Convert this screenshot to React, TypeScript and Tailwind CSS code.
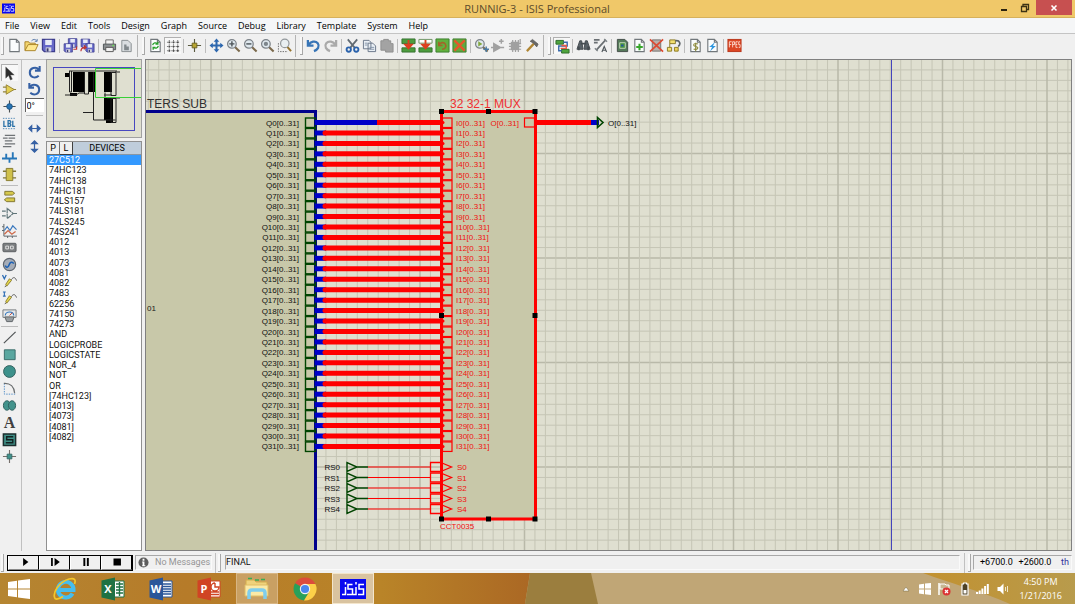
import React from "react";

type IconDef = { label: string; art: React.ReactNode; pressed?: boolean };

const Glyph = ({ children }: { children: React.ReactNode }) => (
  <svg viewBox="0 0 16 16" className="h-[15px] w-[15px] shrink-0" fill="none" aria-hidden="true">
    {children}
  </svg>
);

const page = (
  <path d="M3 1.500h7l3 3v10H3z M10 1.500v3h3" fill="#fafcfd" stroke="#71777b" strokeWidth="1.200" />
);
const floppy = (x: number, y: number, s: number) => (
  <g transform={`translate(${x} ${y}) scale(${s})`}>
    <path d="M1 1h13v13H3l-2-2z" fill="#6668c8" stroke="#3c3c8c" strokeWidth="1.200" />
    <path d="M4 1.500h7V7H4z" fill="#e8ecf6" />
    <path d="M4.500 9.500h6V14h-6z" fill="#d6d8de" />
    <path d="M5.500 10.500h2V14h-2z" fill="#3a3a70" />
  </g>
);
const lens = (
  <>
    <path d="M9.500 9.500l5 5" stroke="#7b6a4c" strokeWidth="2.200" />
    <circle cx="6.300" cy="6.300" r="4.600" fill="#dfe8ee" stroke="#7c8288" strokeWidth="1.300" />
  </>
);

const fileIcons: IconDef[][] = [
  [
    { label: "New design", art: page },
    {
      label: "Open design",
      art: (
        <>
          <path d="M1 13V4h4l1 1.500h6V8" fill="#f3d670" stroke="#a98228" />
          <path d="M1 13.500L4.500 7H15l-3 6.500z" fill="#ffe88e" stroke="#a98228" />
          <path d="M8 3c2-2 4-2 5.500 0M14 1v2.500h-2.500" stroke="#5676a8" />
        </>
      ),
    },
    { label: "Save design", art: floppy(0.5, 0.5, 1) },
  ],
  [
    {
      label: "Import section",
      art: (
        <>
          {floppy(5, 0, 0.7)}
          {floppy(0.5, 5.5, 0.68)}
          <path d="M11 12h3.500V9" stroke="#c03434" strokeWidth="1.300" />
        </>
      ),
    },
    {
      label: "Export section",
      art: (
        <>
          {floppy(0.5, 0.5, 0.7)}
          {floppy(5.5, 5.5, 0.68)}
          <path d="M1 14c0-3 2-4 5-4M4 8l2.500 2L4 12" stroke="#c03434" strokeWidth="1.300" />
        </>
      ),
    },
  ],
  [
    {
      label: "Print",
      art: (
        <>
          <path d="M4 7V2h8v5" fill="#f4f4f4" stroke="#666" />
          <path d="M1.500 6.500h13v6h-13z" fill="#8b9092" stroke="#4f5456" />
          <path d="M4 10h8v4.500H4z" fill="#f2f2f2" stroke="#555" />
          <path d="M11 8h2" stroke="#6ede58" strokeWidth="1.500" />
        </>
      ),
    },
    {
      label: "Set print area",
      art: (
        <>
          <path d="M3 2.500h6.500L13 6v8.500H3z" fill="#d9dde0" stroke="#858b8e" />
          <path d="M5.500 7v6h5V9H8V7z" fill="#80878b" />
        </>
      ),
    },
  ],
];

const viewIcons: IconDef[][] = [
  [
    {
      label: "Redraw",
      art: (
        <>
          {page}
          <path d="M5 7.500c.5-2.500 3.500-3 5-1.500M10.500 4v2.500H8M11 8.500c-.5 2.500-3.500 3-5 1.500M5.500 12.500V10H8" stroke="#28a02c" strokeWidth="1.400" />
        </>
      ),
    },
    {
      label: "Toggle grid",
      pressed: true,
      art: (
        <>
          <path d="M3.500 1v14M8 1v14M12.500 1v14M1 3.500h14M1 8h14M1 12.500h14" stroke="#808080" strokeWidth="1.100" strokeDasharray="1.400 .9" />
          <path d="M2.700 2.700h1.600v1.600H2.700zM7.200 2.700h1.600v1.600H7.200zM11.700 2.700h1.600v1.600h-1.600zM2.700 7.200h1.600v1.600H2.700zM7.200 7.200h1.600v1.600H7.200zM11.700 7.200h1.600v1.600h-1.600zM2.700 11.700h1.600v1.600H2.700zM7.200 11.700h1.600v1.600H7.200zM11.700 11.700h1.600v1.600h-1.600z" fill="#4c4c4c" />
        </>
      ),
    },
  ],
  [
    {
      label: "Origin",
      art: (
        <>
          <path d="M8 1v14M1 8h14" stroke="#5a5a40" strokeWidth="1.200" />
          <path d="M5.500 5.500h5v5h-5z" fill="#b7a531" stroke="#6c6222" />
        </>
      ),
    },
  ],
  [
    {
      label: "Pan",
      art: (
        <>
          <path d="M8 2.500v11M2.500 8h11" stroke="#2d67ae" strokeWidth="2.200" />
          <path d="M8 .5L11 4H5zM8 15.500L5 12h6zM.5 8L4 5v6zM15.500 8L12 11V5z" fill="#2d67ae" />
        </>
      ),
    },
    { label: "Zoom in", art: <>{lens}<path d="M6.300 3.500v5.500M3.500 6.300H9" stroke="#4c5358" strokeWidth="1.500" /></> },
    { label: "Zoom out", art: <>{lens}<path d="M3.500 6.300H9" stroke="#4c5358" strokeWidth="1.500" /></> },
    { label: "Zoom all", art: <>{lens}<circle cx="6.300" cy="6.300" r="2.300" fill="#7d858b" /></> },
    {
      label: "Zoom area",
      art: (
        <>
          <path d="M1.500 5.500v9h10" stroke="#666" strokeDasharray="1.500 1.200" />
          <path d="M11 9.500l4 4.500" stroke="#94732e" strokeWidth="2.200" />
          <circle cx="8.300" cy="5.800" r="4.500" fill="#e9eff2" stroke="#92989c" strokeWidth="1.300" />
        </>
      ),
    },
  ],
];

const undoPath = "M2 2v6h6M2.500 7.500C5 3.500 10 2.500 12.500 5.500c2.500 3.500 0 7-4 8.500";
const editIcons: IconDef[][] = [
  [
    { label: "Undo", art: <path d={undoPath} stroke="#3774b6" strokeWidth="2.400" /> },
    { label: "Redo", art: <g transform="translate(16 0) scale(-1 1)"><path d={undoPath} stroke="#aaaaaa" strokeWidth="2.400" /></g> },
  ],
  [
    {
      label: "Cut",
      art: (
        <>
          <path d="M3 1.500l7.500 9M13 1.500l-7.500 9" stroke="#626b73" strokeWidth="1.900" />
          <circle cx="4" cy="12.300" r="2.300" stroke="#2a62ac" strokeWidth="2" />
          <circle cx="12" cy="12.300" r="2.300" stroke="#2a62ac" strokeWidth="2" />
        </>
      ),
    },
    {
      label: "Copy",
      art: (
        <>
          <path d="M1.500 2.500h6l2 2v7h-8zM6.500 5.500h5l3 3v6h-8z" fill="#e9eff5" stroke="#687488" />
          <path d="M3 5.500h3M3 7.500h3M8 10h5M8 12h5" stroke="#8494aa" />
        </>
      ),
    },
    { label: "Paste", art: <path d="M2 3h3V1.500h5V3h2.500v3H15v9H7v-2H2z" fill="#a3a3a3" stroke="#8e8e8e" /> },
  ],
  [
    {
      label: "Block copy",
      art: (
        <>
          <path d="M1 1h14v5H1zM1 10.500h14V15H1z" fill="#4c9c3e" stroke="#347030" />
          <path d="M8 2v8M4.500 7L8 11l3.500-4z" fill="#e24b2a" stroke="#dc4020" strokeWidth="2" />
        </>
      ),
    },
    {
      label: "Block move",
      art: (
        <>
          <path d="M1 1.500h14v4H1z" fill="#fff" stroke="#6a9160" />
          <path d="M1 10.500h14V15H1z" fill="#4c9c3e" stroke="#347030" />
          <path d="M8 2v8M4.500 7L8 11l3.500-4z" fill="#e24b2a" stroke="#dc4020" strokeWidth="2" />
        </>
      ),
    },
    {
      label: "Block rotate",
      art: (
        <>
          <path d="M1 1h14v14H1z" fill="#61b03e" stroke="#3a7e30" />
          <path d="M4 4v4h4M4.500 7.500c1-3 5-3.500 6.500-1s0 5.500-3.500 5.500" stroke="#a3642a" strokeWidth="1.700" />
        </>
      ),
    },
    {
      label: "Block delete",
      art: (
        <>
          <path d="M1 1h14v14H1z" fill="#61a83e" stroke="#3a7e30" />
          <path d="M2.500 2.500l11 11M13.500 2.500l-11 11" stroke="#e4572c" strokeWidth="2.500" />
        </>
      ),
    },
  ],
  [
    {
      label: "Pick parts",
      art: (
        <>
          {lens}
          <path d="M4.500 3.500v5.600l4.500-2.800z" fill="#83a83c" />
          <path d="M13 9v6M10 12h6" stroke="#497aa4" strokeWidth="1.500" />
        </>
      ),
    },
    { label: "Make device", art: <path d="M3 6l7 4-7 4zM0 10h3M10 10h4M11 1v5M8.500 3.500h5" fill="#a1a1a1" stroke="#a1a1a1" strokeWidth="1.600" /> },
    {
      label: "Packaging tool",
      art: (
        <>
          <path d="M3 4h9v9H3z" fill="#a0a0a0" />
          <path d="M5 2v13M8 2v13M11 2v13M1 6h13M1 9h13M1 12h13M13 1v5" stroke="#a0a0a0" strokeWidth="1.300" />
        </>
      ),
    },
    {
      label: "Decompose",
      art: (
        <>
          <path d="M9.500 6L2 14" stroke="#b08634" strokeWidth="2.400" />
          <path d="M5.500 3.500L8 1.500l6 5-1.500 3L9 5.500z" fill="#696969" stroke="#555" strokeWidth=".7" />
        </>
      ),
    },
  ],
];

const toolIcons: IconDef[][] = [
  [
    {
      label: "Wire autorouter",
      pressed: true,
      art: (
        <>
          <path d="M1 1.500h8v4H1zM7 11h8v4H7z" fill="#4fa43e" stroke="#2d6a2a" />
          <path d="M9 3.500h4v4H4v5h3" stroke="#3769ac" strokeWidth="1.500" />
          <path d="M7 7h5v3H6" stroke="#e85a42" strokeWidth="1.500" />
        </>
      ),
    },
  ],
  [
    {
      label: "Search and tag",
      art: (
        <>
          <path d="M4 3h2l1.500 9H1zM10 3h2l3 9H8.500z" fill="#5a6268" stroke="#444b50" />
          <path d="M5 6h6M3 9v4M13 9v4" stroke="#444b50" strokeWidth="2" />
        </>
      ),
    },
    {
      label: "Property assignment",
      art: (
        <>
          <path d="M1 2h6M1 5h4M13.500 2l-10 11" stroke="#6a6f73" strokeWidth="1.800" />
          <path d="M12 1l3 3M2 11l3 3" stroke="#7e8488" strokeWidth="1.500" />
          <path d="M9.500 15l2.500-6 2.500 6M10.500 13h3" stroke="#4f565b" strokeWidth="1.200" />
        </>
      ),
    },
  ],
  [
    {
      label: "Design explorer",
      art: (
        <>
          <path d="M2.500 1.500h8l3 3v10h-11z" fill="#557a5a" stroke="#404a44" />
          <path d="M5 5h6v6H5z" fill="#4b9440" stroke="#c5dabb" />
          <path d="M6.500 8h2.500" stroke="#2455a4" strokeWidth="2" />
        </>
      ),
    },
    { label: "New sheet", art: <>{page}<path d="M8 6v7M4.500 9.500h7" stroke="#36a62a" strokeWidth="2.200" /></> },
    {
      label: "Remove sheet",
      art: (
        <>
          <path d="M3.500 2h9v12h-9z" fill="#b9b0aa" stroke="#73706d" />
          <path d="M1 1.500l14 13M15 1.500l-14 13" stroke="#dc4a32" strokeWidth="1.800" />
        </>
      ),
    },
    {
      label: "Exit to parent",
      art: (
        <>
          <path d="M4 2h6v4H4zM1.500 10H6v4H1.500z" fill="#f2df70" stroke="#8b7a24" />
          <path d="M4 10V6M9 10h4v4H9z" fill="#ecd258" stroke="#8b7a24" />
          <path d="M10 3c5-1 6 4 3 6" stroke="#5d6367" strokeWidth="1.800" />
        </>
      ),
    },
  ],
  [
    {
      label: "Bill of materials",
      art: (
        <>
          {page}
          <path d="M10.500 6.500c-1-1-4.500-1-4.500 1s4.500 1 4.500 3-3.500 2-4.500 1M8.200 5v9" stroke="#8c8a3c" strokeWidth="1.200" />
        </>
      ),
    },
    { label: "Electrical rules check", art: <>{page}<path d="M10.500 4.500L4.500 9.500h3l-2 4.500 6-5.500H8.500z" fill="#2f97e0" /></> },
  ],
  [
    {
      label: "Netlist to ARES",
      art: (
        <>
          <rect x="1" y="1.500" width="14" height="13" fill="#dc4624" stroke="#b83418" />
          <path d="M2.500 10V4h2.500M2.500 7h2M6 10V4h2v3H6M9.500 4v6h1.800M9.500 4h2M9.500 7h1.500M14 4h-1.500v3H14v3h-1.500" stroke="#ffe4dc" strokeWidth=".9" />
        </>
      ),
    },
  ],
];

const modeIcons: IconDef[][] = [
  [
    { label: "Selection mode", pressed: true, art: <path d="M4 1v12l3-3 2 5 2-1-2-4.500h4z" fill="#2e2e2e" stroke="#555" strokeWidth=".5" /> },
    {
      label: "Component mode",
      art: (
        <>
          <path d="M1 5.500h4M1 10.500h4M12 8h3" stroke="#928238" strokeWidth="1.300" />
          <path d="M4.500 3v10L13 8z" fill="#e3cf52" stroke="#948234" />
        </>
      ),
    },
    {
      label: "Junction dot mode",
      art: (
        <>
          <path d="M8 1.500v13M1.500 8h13" stroke="#4d5254" strokeWidth="1.200" />
          <circle cx="8" cy="8" r="3" fill="#2674b4" stroke="#1d5282" />
        </>
      ),
    },
    {
      label: "Wire label mode",
      art: (
        <>
          <path d="M1 2.500h14M1 13.500h14" stroke="#4f86b4" strokeDasharray="1.500 1.300" />
          <path d="M2 5v6h2.500M6.500 5v6h2l1-1.500L8.500 8 9.500 6.500 8.500 5zM6.500 8h2M11.500 5v6H14" stroke="#2c72a8" strokeWidth="1.400" />
        </>
      ),
    },
    { label: "Text script mode", art: <path d="M3 2.500h11M1 5.500h5M7 5.500h7M3 8.500h8M3 11.500h11M1 14.500h9" stroke="#6f7376" strokeWidth="1.300" /> },
    { label: "Buses mode", art: <path d="M0 9h16M4.500 4v5M11.500 2.500v6.500M8 9v4.500" stroke="#2676b8" strokeWidth="2" /> },
    {
      label: "Subcircuit mode",
      art: (
        <>
          <path d="M1 4.500h4M1 11.500h4M11 4.500h4M11 11.500h4" stroke="#7f7634" strokeWidth="1.400" />
          <path d="M4.500 1.500h7v13h-7z" fill="#cfc04a" stroke="#857a30" />
        </>
      ),
    },
  ],
  [
    { label: "Terminals mode", art: <path d="M3 2.500h8l2.500 2-2.500 2H3zM5 9.500h8.500v4H5l-2.500-2z" fill="#d6c84c" stroke="#7f7430" /> },
    { label: "Device pins mode", art: <path d="M5.500 2.500v11L12 8zM0 5.500h4M0 10.500h4M12 8h4" stroke="#5f7478" strokeWidth="1.200" strokeDasharray="5 .6" /> },
    {
      label: "Graph mode",
      art: (
        <>
          <path d="M2 1v13h14M0 4h2M0 8h2M6 14v2M11 14v2" stroke="#596064" />
          <path d="M2.500 8l3-4 3 4 3-5 4 4" stroke="#3a78be" strokeWidth="1.300" />
          <path d="M2.500 12l4-4 4 4 4-3" stroke="#cc6646" strokeWidth="1.300" />
        </>
      ),
    },
    {
      label: "Tape recorder mode",
      art: (
        <>
          <rect x="1" y="3.500" width="14" height="9" rx="1" fill="#7b7e80" stroke="#5a5d60" />
          <path d="M4 6.500h3v3H4zM9 6.500h3v3H9z" stroke="#e4e4e4" />
        </>
      ),
    },
    {
      label: "Generator mode",
      art: (
        <>
          <circle cx="8" cy="8" r="6.500" fill="#a6adb8" stroke="#5e656e" strokeWidth="1.300" />
          <path d="M3.500 9c1 3 3 2.500 4-.5s3.500-4 5-1.500" stroke="#1f62b4" strokeWidth="1.700" />
        </>
      ),
    },
    {
      label: "Voltage probe mode",
      art: (
        <>
          <path d="M0.500 1l2 4 2-4" stroke="#2d6cb4" strokeWidth="1.400" />
          <path d="M3 14l7-8c2-3 4-3 5.500 1" stroke="#555" />
          <path d="M5 13l5-6-2-2-4 6z" fill="#e8da4c" stroke="#8b7c2e" />
        </>
      ),
    },
    {
      label: "Current probe mode",
      art: (
        <>
          <path d="M1 1h3M2.500 1v4.500M1 5.500h3" stroke="#2d6cb4" strokeWidth="1.200" />
          <path d="M3 14l7-8c2-3 4-3 5.500 1" stroke="#555" />
          <path d="M5 13l5-6-2-2-4 6z" fill="#e8da4c" stroke="#8b7c2e" />
        </>
      ),
    },
    {
      label: "Virtual instruments mode",
      art: (
        <>
          <path d="M1 2h14v8H1z" fill="#e7e9ea" stroke="#757a7e" />
          <path d="M3.500 8c0-5 9-5 9 0" stroke="#3478be" strokeWidth="1.200" />
          <path d="M8 8l3-3" stroke="#c5473a" />
          <path d="M3 9.500h10l-2 5H5z" fill="#9a9fa2" stroke="#5c6164" />
        </>
      ),
    },
  ],
  [
    { label: "Line", art: <path d="M2 14L14.500 2" stroke="#505456" strokeWidth="1.300" /> },
    { label: "Box", art: <path d="M2.500 3h11.500v10.500H2.500z" fill="#5aa7a0" stroke="#376a68" /> },
    { label: "Circle", art: <circle cx="8" cy="8" r="6.300" fill="#3d918b" stroke="#33605e" /> },
    { label: "Arc", art: <><path d="M2.500 2.500V14H14" stroke="#4f8cc8" strokeDasharray="1.500 1.200" /><path d="M2 2.500c7-.5 11 4 11.500 10.500" stroke="#686c6e" strokeWidth="1.300" /></> },
    { label: "Path", art: <path d="M8 4.500C6 1.500 1.500 3 1.500 8S6 14.500 8 11.500c2 3 6.500 1.500 6.500-3.500S10 1.500 8 4.500zM8 4.500c-1.500 2-1.500 5 0 7" fill="#43938c" stroke="#2f5e5c" /> },
    {
      label: "Text",
      art: <text x="8" y="14" textAnchor="middle" className="fill-[#404040] font-['Liberation_Serif',serif] text-[17px] font-bold">A</text>,
    },
    {
      label: "Symbol",
      art: (
        <>
          <path d="M1.500 2h13v12.500h-13z" fill="#3f8f86" stroke="#1c2e2e" strokeWidth="1.600" />
          <path d="M12 5H5v3.200h6.500v3.300H4" stroke="#122020" strokeWidth="1.500" />
        </>
      ),
    },
    {
      label: "Marker",
      art: (
        <>
          <path d="M8 1v14M1 8h14" stroke="#77706c" strokeWidth="1.200" />
          <path d="M5.500 5.500h5v5h-5z" fill="#3f928b" stroke="#376a68" />
        </>
      ),
    },
  ],
];

const ToolButton = ({ icon }: { icon: IconDef }) => (
  <button
    aria-label={icon.label}
    className={`flex h-[17px] w-[17px] shrink-0 items-center justify-center ${icon.pressed ? "border-t border-l border-[#b0b0b0] bg-[#f8f8f8]" : ""}`}
  >
    <Glyph>{icon.art}</Glyph>
  </button>
);

const Grip = () => <span className="h-[18px] w-[3px] shrink-0 border-r border-b border-[#a8a8a8] bg-[#f8f8f8]" />;

const Toolbar = ({ groups, last }: { groups: IconDef[][]; last?: boolean }) => (
  <div className="flex items-center">
    {groups.map((group, i) => (
      <React.Fragment key={i}>
        {i > 0 && (
          <span className="flex w-[5px] justify-center">
            <span className="h-[14px] w-px bg-[#bcbcbc]" />
          </span>
        )}
        {group.map((icon) => (
          <ToolButton key={icon.label} icon={icon} />
        ))}
      </React.Fragment>
    ))}
    {!last && (
      <span className="flex w-3 items-center justify-center gap-1">
        <span className="h-[22px] w-px bg-[#b4b4b4]" />
        <Grip />
      </span>
    )}
  </div>
);

const menus = ["File", "View", "Edit", "Tools", "Design", "Graph", "Source", "Debug", "Library", "Template", "System", "Help"];

const devices = [
  "27C512", "74HC123", "74HC138", "74HC181", "74LS157", "74LS181", "74LS245", "74S241", "4012", "4013",
  "4073", "4081", "4082", "7483", "62256", "74150", "74273", "AND", "LOGICPROBE", "LOGICSTATE",
  "NOR_4", "NOT", "OR", "[74HC123]", "[4013]", "[4073]", "[4081]", "[4082]",
];

const IsisMark = ({ className }: { className: string }) => (
  <svg viewBox="0 0 26 20" className={className} fill="none" aria-hidden="true">
    <rect width="26" height="20" fill="#0808f0" />
    <path d="M2 15.500h3.500V8M5.500 3v2.500M12.500 5.500H8V10h4.500v5.500H7M12.500 15.500H16V8M16 3v2.500M24 5.500h-5V10h4.500v5.500h-5.500" stroke="#fff" strokeWidth="1.500" />
  </svg>
);

const TitleBar = () => (
  <header className="flex h-[18px] shrink-0 items-center border-b border-[#d6b15c] bg-[#f0c869] pl-[2px]">
    <IsisMark className="h-[11px] w-[13px]" />
    <h1 className="flex-1 pl-[65px] text-center text-[11px] leading-[16px] text-[#5c4c2c]">RUNNIG-3 - ISIS Professional</h1>
    <div className="flex h-full items-start">
      <button aria-label="Minimize" className="flex h-[15px] w-5 items-center justify-center">
        <svg viewBox="0 0 10 10" className="h-[10px] w-[10px]"><path d="M2 6h6v2H2z" fill="#2c2410" /></svg>
      </button>
      <button aria-label="Restore" className="flex h-[15px] w-[22px] items-center justify-center">
        <svg viewBox="0 0 10 10" className="h-[10px] w-[10px]" fill="none"><path d="M1.500 3.500h5v5h-5zM3 3V1.500h5.500v5H7" stroke="#3c3214" strokeWidth="1.300" /></svg>
      </button>
      <button aria-label="Close" className="mr-[3px] flex h-[15px] w-9 items-center justify-center bg-[#c75050]">
        <svg viewBox="0 0 10 10" className="h-[10px] w-[10px]"><path d="M2.500 2.500l5 5M7.500 2.500l-5 5" stroke="#fff" strokeWidth="1.600" /></svg>
      </button>
    </div>
  </header>
);

const Overview = () => (
  <div className="h-[79px] border border-[#a0a0a0] bg-[#dfdfd0]">
    <svg viewBox="0 0 94 77" className="h-full w-full" fill="none" role="img" aria-label="Design overview">
      <rect x="6.500" y="7.500" width="81" height="63" stroke="#4848c0" />
      <path d="M18 13h5v4h-5zM26 12h11v20H26zM41 12h7v20h-7zM57 12h8v20h-8zM57 38h9v22h-9zM59 60h7v3h-7zM23 33h7v3h-7z" fill="#000" />
      <path d="M22 11h48M22.500 11v21h2V11M37.500 12v22h4V12M18 35h11l3-2h6M46.500 12v48h22M64 12.500h5v23h-5zM64 38.500h5v24h-5zM36 52.500h11M58 32.500v5M57 35h8M60 38h13M68 12h5" stroke="#222" />
      <path d="M94 8.500H48.500v29H94" stroke="#38d038" />
    </svg>
  </div>
);

const PITCH = 10.45;
const rows = Array.from({ length: 32 }, (_, i) => ({ i, y: 122.5 + i * PITCH }));
const gridLines = Array.from({ length: 230 }, (_, i) => i - 9);

const Schematic = () => (
  <svg className="absolute inset-0 h-full w-full" fill="none" role="img" aria-label="Schematic sheet">
    <g transform="translate(-146 -60)" className="font-['Liberation_Sans',sans-serif] text-[8px]">
      {gridLines.map((n) => {
        const x = 211 + n * PITCH;
        const y = 153.5 + n * PITCH;
        const major = n % 10 === 0;
        return (
          <g key={n} stroke={major ? "#b9b9a9" : "#c5c5b5"} strokeWidth={major ? 1.5 : 1}>
            <path d={`M${x} 0V3000`} />
            <path d={`M0 ${y}H3000`} />
          </g>
        );
      })}
      <path d="M891.500 0V3000" stroke="#4444bc" strokeWidth="1" />

      <path d="M130 111.500H315.500V3000H130z" fill="#c8c8a9" stroke="#00008c" strokeWidth="3" />
      <text x="147" y="108" className="text-[12px]" fill="#303030">TERS SUB</text>
      <text x="147" y="311" fill="#202020">01</text>

      <rect x="441.500" y="111.500" width="94" height="407.500" fill="#c8c8a9" stroke="#ff0000" strokeWidth="3" />
      <text x="450" y="108" className="text-[12px]" fill="#f03030">32 32-1 MUX</text>
      <text x="440" y="529" fill="#f01010">CCT0035</text>

      {rows.map(({ i, y }) => (
        <g key={i}>
          <text x="299" y={y + 3} textAnchor="end" fill="#101010">{`Q${i}[0..31]`}</text>
          <rect x="305.500" y={y - 4.5} width="10" height="9.500" stroke="#004400" strokeWidth="1.400" />
          <path d={`M315 ${y}H${i === 0 ? 378 : 326}`} stroke="#0000c8" strokeWidth="5" />
          <path d={`M${i === 0 ? 377 : 325} ${y}H442`} stroke="#ff0000" strokeWidth="5" />
          {i > 0 && <circle cx="325" cy={y} r="2.500" fill="#ff0000" />}
          <circle cx="443" cy={y} r="1.500" fill="#ff0000" />
          <rect x="442.500" y={y - 4.5} width="9.500" height="9.500" stroke="#ff0000" strokeWidth="1.200" />
          <text x="456" y={y + 3} fill="#f01010">{`I${i}[0..31]`}</text>
        </g>
      ))}

      <text x="519" y="125.500" textAnchor="end" fill="#f01010">O[0..31]</text>
      <rect x="524.500" y="118" width="10" height="9" stroke="#ff0000" strokeWidth="1.200" />
      <path d="M535 122.500H592" stroke="#ff0000" strokeWidth="5" />
      <path d="M591 122.500H599" stroke="#0000c8" strokeWidth="5" />
      <path d="M597.500 117.500v10l5.500-5z" stroke="#004400" strokeWidth="1.600" />
      <text x="608" y="125.500" fill="#101010">O[0..31]</text>

      {[0, 1, 2, 3, 4].map((i) => {
        const y = 467 + i * 10.5;
        return (
          <g key={i}>
            <text x="324.500" y={y + 3} fill="#101010">{`RS${i}`}</text>
            <path d={`M347 ${y - 4.5}v9l10-4.500zM357 ${y}h11`} stroke="#004400" strokeWidth="1.400" />
            <path d={`M368 ${y}h62`} stroke="#ff0000" strokeWidth="1.200" />
            <path d={`M441 ${y - 4.5}H430.500v9H441M442 ${y - 4}l9.500 4-9.500 4`} stroke="#ff0000" strokeWidth="1.300" />
            <text x="457" y={y + 3} fill="#f01010">{`S${i}`}</text>
          </g>
        );
      })}

      {[[441.5, 111.5], [488.5, 111.5], [535, 111.5], [441.5, 315.5], [535, 315.5], [441.5, 519], [488.5, 519], [535, 519]].map(([x, y]) => (
        <rect key={`${x}-${y}`} x={x - 2.5} y={y - 2.5} width="5" height="5" fill="#000" />
      ))}
    </g>
  </svg>
);

const SidePanel = () => (
  <aside className="mr-[3px] flex w-[96px] shrink-0 flex-col">
    <Overview />
    <div className="mt-[3px] flex min-h-0 flex-1 flex-col border border-[#909090] bg-white font-['Roboto',sans-serif] text-[9px]">
      <div className="flex h-[13px] shrink-0 bg-[#f0f0f0] leading-[12px]">
        <button className="w-[13px] border-r border-b border-[#707070]">P</button>
        <button className="w-[13px] border-r border-b border-[#404040]">L</button>
        <h2 className="flex-1 border-b border-[#8896a4] bg-[#bfcddb] text-center">DEVICES</h2>
      </div>
      <ul className="grid h-[287px] shrink-0 auto-rows-fr leading-[10px] text-[#101010]">
        {devices.map((d, i) => (
          <li key={d} className={`flex items-center pl-[2px] ${i === 0 ? "bg-[#3399ff] text-white" : ""}`}>{d}</li>
        ))}
      </ul>
    </div>
  </aside>
);

const rotate = "M12.500 4.500C9.500 1.500 3 3 3 8s5.500 7 9.500 3.500M13.500 1v5h-5";

const ModeRail = () => (
  <div className="flex shrink-0">
    <nav aria-label="Modes" className="flex w-[22px] flex-col border-t border-r border-[#c0c0c0] pt-1 pr-[3px]">
      {modeIcons.map((group, i) => (
        <div key={i} className="flex flex-col items-center">
          {i > 0 && <span className="my-[2px] h-px w-[17px] bg-[#bcbcbc]" />}
          {group.map((icon) => (
            <ToolButton key={icon.label} icon={icon} />
          ))}
        </div>
      ))}
    </nav>
    <div className="flex w-6 flex-col items-center border-t border-[#c0c0c0] pt-1">
      <button aria-label="Rotate clockwise" className="flex h-[17px] items-center"><Glyph><path d={rotate} stroke="#3560a4" strokeWidth="2.200" /></Glyph></button>
      <button aria-label="Rotate anti-clockwise" className="flex h-[17px] items-center"><Glyph><g transform="translate(16 0) scale(-1 1)"><path d={rotate} stroke="#3560a4" strokeWidth="2.200" /></g></Glyph></button>
      <input aria-label="Angle" defaultValue="0°" className="h-[14px] w-[19px] border-t border-l border-[#606060] bg-white pl-px font-['Roboto',sans-serif] text-[9px]" />
      <span className="my-[3px] h-px w-[17px] bg-[#bcbcbc]" />
      <button aria-label="Mirror horizontally" className="flex h-[18px] items-center"><Glyph><path d="M4 8h8M5 5L2 8l3 3zM11 5l3 3-3 3z" fill="#3560a4" stroke="#3560a4" strokeWidth="1.300" /></Glyph></button>
      <button aria-label="Mirror vertically" className="flex h-[18px] items-center"><Glyph><path d="M8 4v8M5 5l3-3 3 3zM5 11l3 3 3-3z" fill="#3560a4" stroke="#3560a4" strokeWidth="1.300" /></Glyph></button>
    </div>
  </div>
);

const transport = [
  { label: "Play", d: "M7 3.500v9l6-4.500z" },
  { label: "Step", d: "M3.500 3.500h2v9h-2zM7.500 3.500v9l6-4.500z" },
  { label: "Pause", d: "M5 3.500h2.200v9H5zM9 3.500h2.200v9H9z" },
  { label: "Stop", d: "M4 4h8.500v8H4z" },
];

const well = "flex h-[15px] items-center border border-t-[#a8a8a8] border-l-[#a8a8a8] border-r-[#fafafa] border-b-[#fafafa]";

const StatusBar = () => (
  <footer className="flex h-[21px] shrink-0 items-center bg-[#f0f0f0] pl-px font-['Roboto',sans-serif] text-[9px]">
    <Grip />
    <div className="ml-[3px] flex border border-black">
      {transport.map((t) => (
        <button key={t.label} aria-label={t.label} className="flex h-[14px] w-[31px] items-center justify-center border-r border-b border-l border-r-black border-b-[#888] border-l-white">
          <svg viewBox="0 0 16 16" className="h-[14px] w-[14px]"><path d={t.d} fill="#000" /></svg>
        </button>
      ))}
    </div>
    <div className={`${well} ml-[2px] w-[77px] gap-[6px] pl-[2px] text-[#959595]`}>
      <svg viewBox="0 0 12 12" className="h-[11px] w-[11px]">
        <circle cx="6" cy="6" r="5.500" fill="#5d5d5d" />
        <path d="M5 2h2v2H5zM4.500 5H7v4h1v1H4.500V9H5V6h-.5z" fill="#fff" />
      </svg>
      No Messages
    </div>
    <span className="ml-[3px] h-[20px] w-px bg-[#c0c0c0]" />
    <span className="ml-[2px] flex"><Grip /></span>
    <div className={`${well} ml-1 flex-1 text-[#101010]`}>FINAL</div>
    <span className="mr-[3px] ml-1 h-[20px] w-px bg-[#c0c0c0]" />
    <Grip />
    <div className={`${well} mr-[3px] ml-[2px] w-[99px] justify-between pr-[2px] pl-[6px]`}>
      <span>+6700.0</span>
      <span>+2600.0</span>
      <span className="pl-1 text-[#30309c]">th</span>
    </div>
  </footer>
);

const OfficeIcon = ({ color, letter, inner }: { color: string; letter: string; inner: string }) => (
  <svg viewBox="0 0 24 24" className="h-6 w-6" fill="none" aria-hidden="true">
    <path d="M11 4h12v16H11z" fill="#fff" stroke={color} />
    <path d={inner} stroke={color} strokeWidth="1.400" />
    <path d="M0.500 3.500L14 .5v23L.5 20.500z" fill={color} />
    <text x="7" y="16" textAnchor="middle" fill="#fff" className="font-['Open_Sans',sans-serif] text-[11px] font-bold">{letter}</text>
  </svg>
);

const TaskButton = ({ label, active, children }: { label: string; active?: string; children: React.ReactNode }) => (
  <button aria-label={label} className={`flex h-full w-[42px] items-center justify-center ${active ?? ""}`}>
    {children}
  </button>
);

const Taskbar = () => (
  <nav aria-label="Taskbar" className="relative flex h-[31px] shrink-0 items-center bg-[#c0a676] text-white">
    <svg viewBox="0 0 1075 31" preserveAspectRatio="none" className="absolute inset-0 h-full w-full" aria-hidden="true">
      <defs>
        <linearGradient id="dune" x1="0" x2="1" y1="0" y2="0">
          <stop offset="0" stopColor="#b58531" />
          <stop offset=".35" stopColor="#b67b29" />
          <stop offset=".72" stopColor="#b98428" />
          <stop offset="1" stopColor="#ab6824" />
        </linearGradient>
        <linearGradient id="sun" x1="0" x2="1" y1="0" y2="0">
          <stop offset="0" stopColor="#c29130" />
          <stop offset="1" stopColor="#b89b4c" />
        </linearGradient>
      </defs>
      <path d="M0 0H530L525 31H0z" fill="url(#dune)" />
      <path d="M530 0H591L598 31H525z" fill="#9b7e3e" />
      <path d="M923 0H1075V31H1010C980 18 950 10 923 0z" fill="url(#sun)" />
    </svg>
    <div className="relative flex h-full flex-1 items-center gap-[6px]">
      <button aria-label="Start" className="flex h-full w-[38px] items-center justify-center">
        <svg viewBox="0 0 22 20" className="h-5 w-[22px]"><path d="M0 3l9-1.300v7.800H0zM10 1.500L22 0v9.500H10zM0 10.500h9v7.800L0 17zM10 10.500h12V20l-12-1.500z" fill="#fff" /></svg>
      </button>
      <TaskButton label="Internet Explorer">
        <svg viewBox="0 0 24 24" className="h-6 w-6" fill="none">
          <path d="M19.500 16.500A7.800 7.800 0 1 1 20.500 13H6.500" stroke="#46bdee" strokeWidth="4" />
          <path d="M2 21.500C-1 16 6 5 16 2c6-1.500 7 1 5.500 5M2 21.500c2 1.500 5 0 8-2" stroke="#f4c629" strokeWidth="1.700" />
        </svg>
      </TaskButton>
      <TaskButton label="Excel"><OfficeIcon color="#1f7244" letter="X" inner="M15 7h7M15 10h7M15 13h7M15 16h7M18.500 5v14" /></TaskButton>
      <TaskButton label="Word"><OfficeIcon color="#2a5699" letter="W" inner="M14 7h8M14 9.500h8M14 12h8M14 14.500h8M14 17h8" /></TaskButton>
      <TaskButton label="PowerPoint"><OfficeIcon color="#d04424" letter="P" inner="M18 6v4h4a4 4 0 1 1-4-4M14 15h8M14 17.500h8" /></TaskButton>
      <TaskButton label="File Explorer" active="border border-[#d8b583] bg-[#c9a063]">
        <svg viewBox="0 0 26 24" className="h-6 w-[26px]" fill="none">
          <path d="M2 3h8l2 2h11v13H2z" fill="#efd27c" stroke="#d4ac4e" />
          <path d="M4 1.500h4M11 3h4M17 2.500h4" stroke="#38ac54" strokeWidth="1.500" />
          <path d="M1 8h23v11H1z" fill="#fbe9a6" stroke="#e0bd64" />
          <path d="M5 22v-6c0-3 2-3 3-3h10c2 0 3 1 3 3v6" stroke="#7fcdec" strokeWidth="3.500" />
        </svg>
      </TaskButton>
      <TaskButton label="Chrome">
        <svg viewBox="0 0 24 24" className="h-6 w-6">
          <path d="M12 12L2 6.300A11.500 11.500 0 0 1 22 6.300L22.500 7H12z" fill="#dd4c3c" />
          <path d="M12 12L2 6.300A11.500 11.500 0 0 0 11 23.400l5.500-9z" fill="#29a05a" />
          <path d="M12 7h10.400A11.500 11.500 0 0 1 11 23.400l5.500-9z" fill="#fcd048" />
          <circle cx="12" cy="12" r="5.200" fill="#f6f4ee" />
          <circle cx="12" cy="12" r="4.100" fill="#4a87ee" />
        </svg>
      </TaskButton>
      <TaskButton label="ISIS Professional" active="border border-[#f4e6cc] bg-[#d9c3a0]"><IsisMark className="h-5 w-[26px]" /></TaskButton>
    </div>
    <div className="relative flex h-full items-center gap-[6px] pr-[13px]">
      <button aria-label="Show hidden icons"><svg viewBox="0 0 8 8" className="mr-[3px] h-2 w-2"><path d="M1 6l3-4 3 4z" fill="#fff" stroke="#776840" strokeWidth=".5" /></svg></button>
      <svg viewBox="0 0 12 12" className="h-3 w-3"><path d="M0 1.500l5-.7v4.700H0zM6 .6L12 0v5.500H6zM0 6.500h5v4.700l-5-.7zM6 6.500h6V12l-6-.7z" fill="#fff" /></svg>
      <svg viewBox="0 0 14 14" className="h-[14px] w-[14px]" fill="none">
        <path d="M2 1v12" stroke="#fff" strokeWidth="1.500" />
        <path d="M3 2h5l1 1h3v5H7L6 7H3z" fill="#c6b793" stroke="#fff" />
        <circle cx="9.500" cy="9.500" r="4" fill="#db3434" />
        <path d="M8 8l3 3M11 8l-3 3" stroke="#fff" strokeWidth="1.300" />
      </svg>
      <svg viewBox="0 0 10 14" className="ml-[3px] h-[14px] w-[10px]" fill="none">
        <path d="M3.500 2V1h3v1H8v11H2V2z" fill="#4d4123" stroke="#fff" strokeWidth="1.200" />
        <path d="M3.500 8h3v3.500h-3z" fill="#fff" />
      </svg>
      <svg viewBox="0 0 13 12" className="h-3 w-[13px]"><path d="M0 9h2v2H0zM2.700 7.500h2V11h-2zM5.400 5.500h2V11h-2zM8.100 3h2v8h-2zM10.800 1h2v10h-2z" fill="#fff" /></svg>
      <svg viewBox="0 0 12 12" className="ml-[2px] h-3 w-3" fill="none">
        <path d="M0.500 4h2.500L6.500.5v11L3 8H.5z" fill="#fff" />
        <path d="M8.500 4v4M10.500 3v6" stroke="#f0e6cc" />
      </svg>
      <time className="ml-1 text-center text-[9px] leading-[14px]">4:50 PM<br />1/21/2016</time>
    </div>
  </nav>
);

export default function App() {
  return (
    <div className="flex h-screen flex-col overflow-hidden bg-[#f0f0f0] font-['Open_Sans',sans-serif] text-black">
      <TitleBar />
      <nav aria-label="Menu" className="flex h-[16px] shrink-0 items-center gap-[11px] border-b border-[#c4c4c4] bg-[#f5f6f7] pl-[5px] text-[9px] leading-[14px]">
        {menus.map((m) => (
          <button key={m}>{m}</button>
        ))}
      </nav>
      <div className="flex h-[25px] shrink-0 items-center pb-[2px] pl-px">
        <span className="mr-[2px] flex"><Grip /></span>
        <Toolbar groups={fileIcons} />
        <Toolbar groups={viewIcons} />
        <Toolbar groups={editIcons} />
        <Toolbar groups={toolIcons} last />
      </div>
      <main className="flex min-h-0 flex-1 pb-px">
        <ModeRail />
        <SidePanel />
        <section className="relative mr-[3px] min-w-0 flex-1 overflow-hidden border border-[#808080] bg-[#dfdfd0]">
          <Schematic />
        </section>
      </main>
      <StatusBar />
      <Taskbar />
    </div>
  );
}
